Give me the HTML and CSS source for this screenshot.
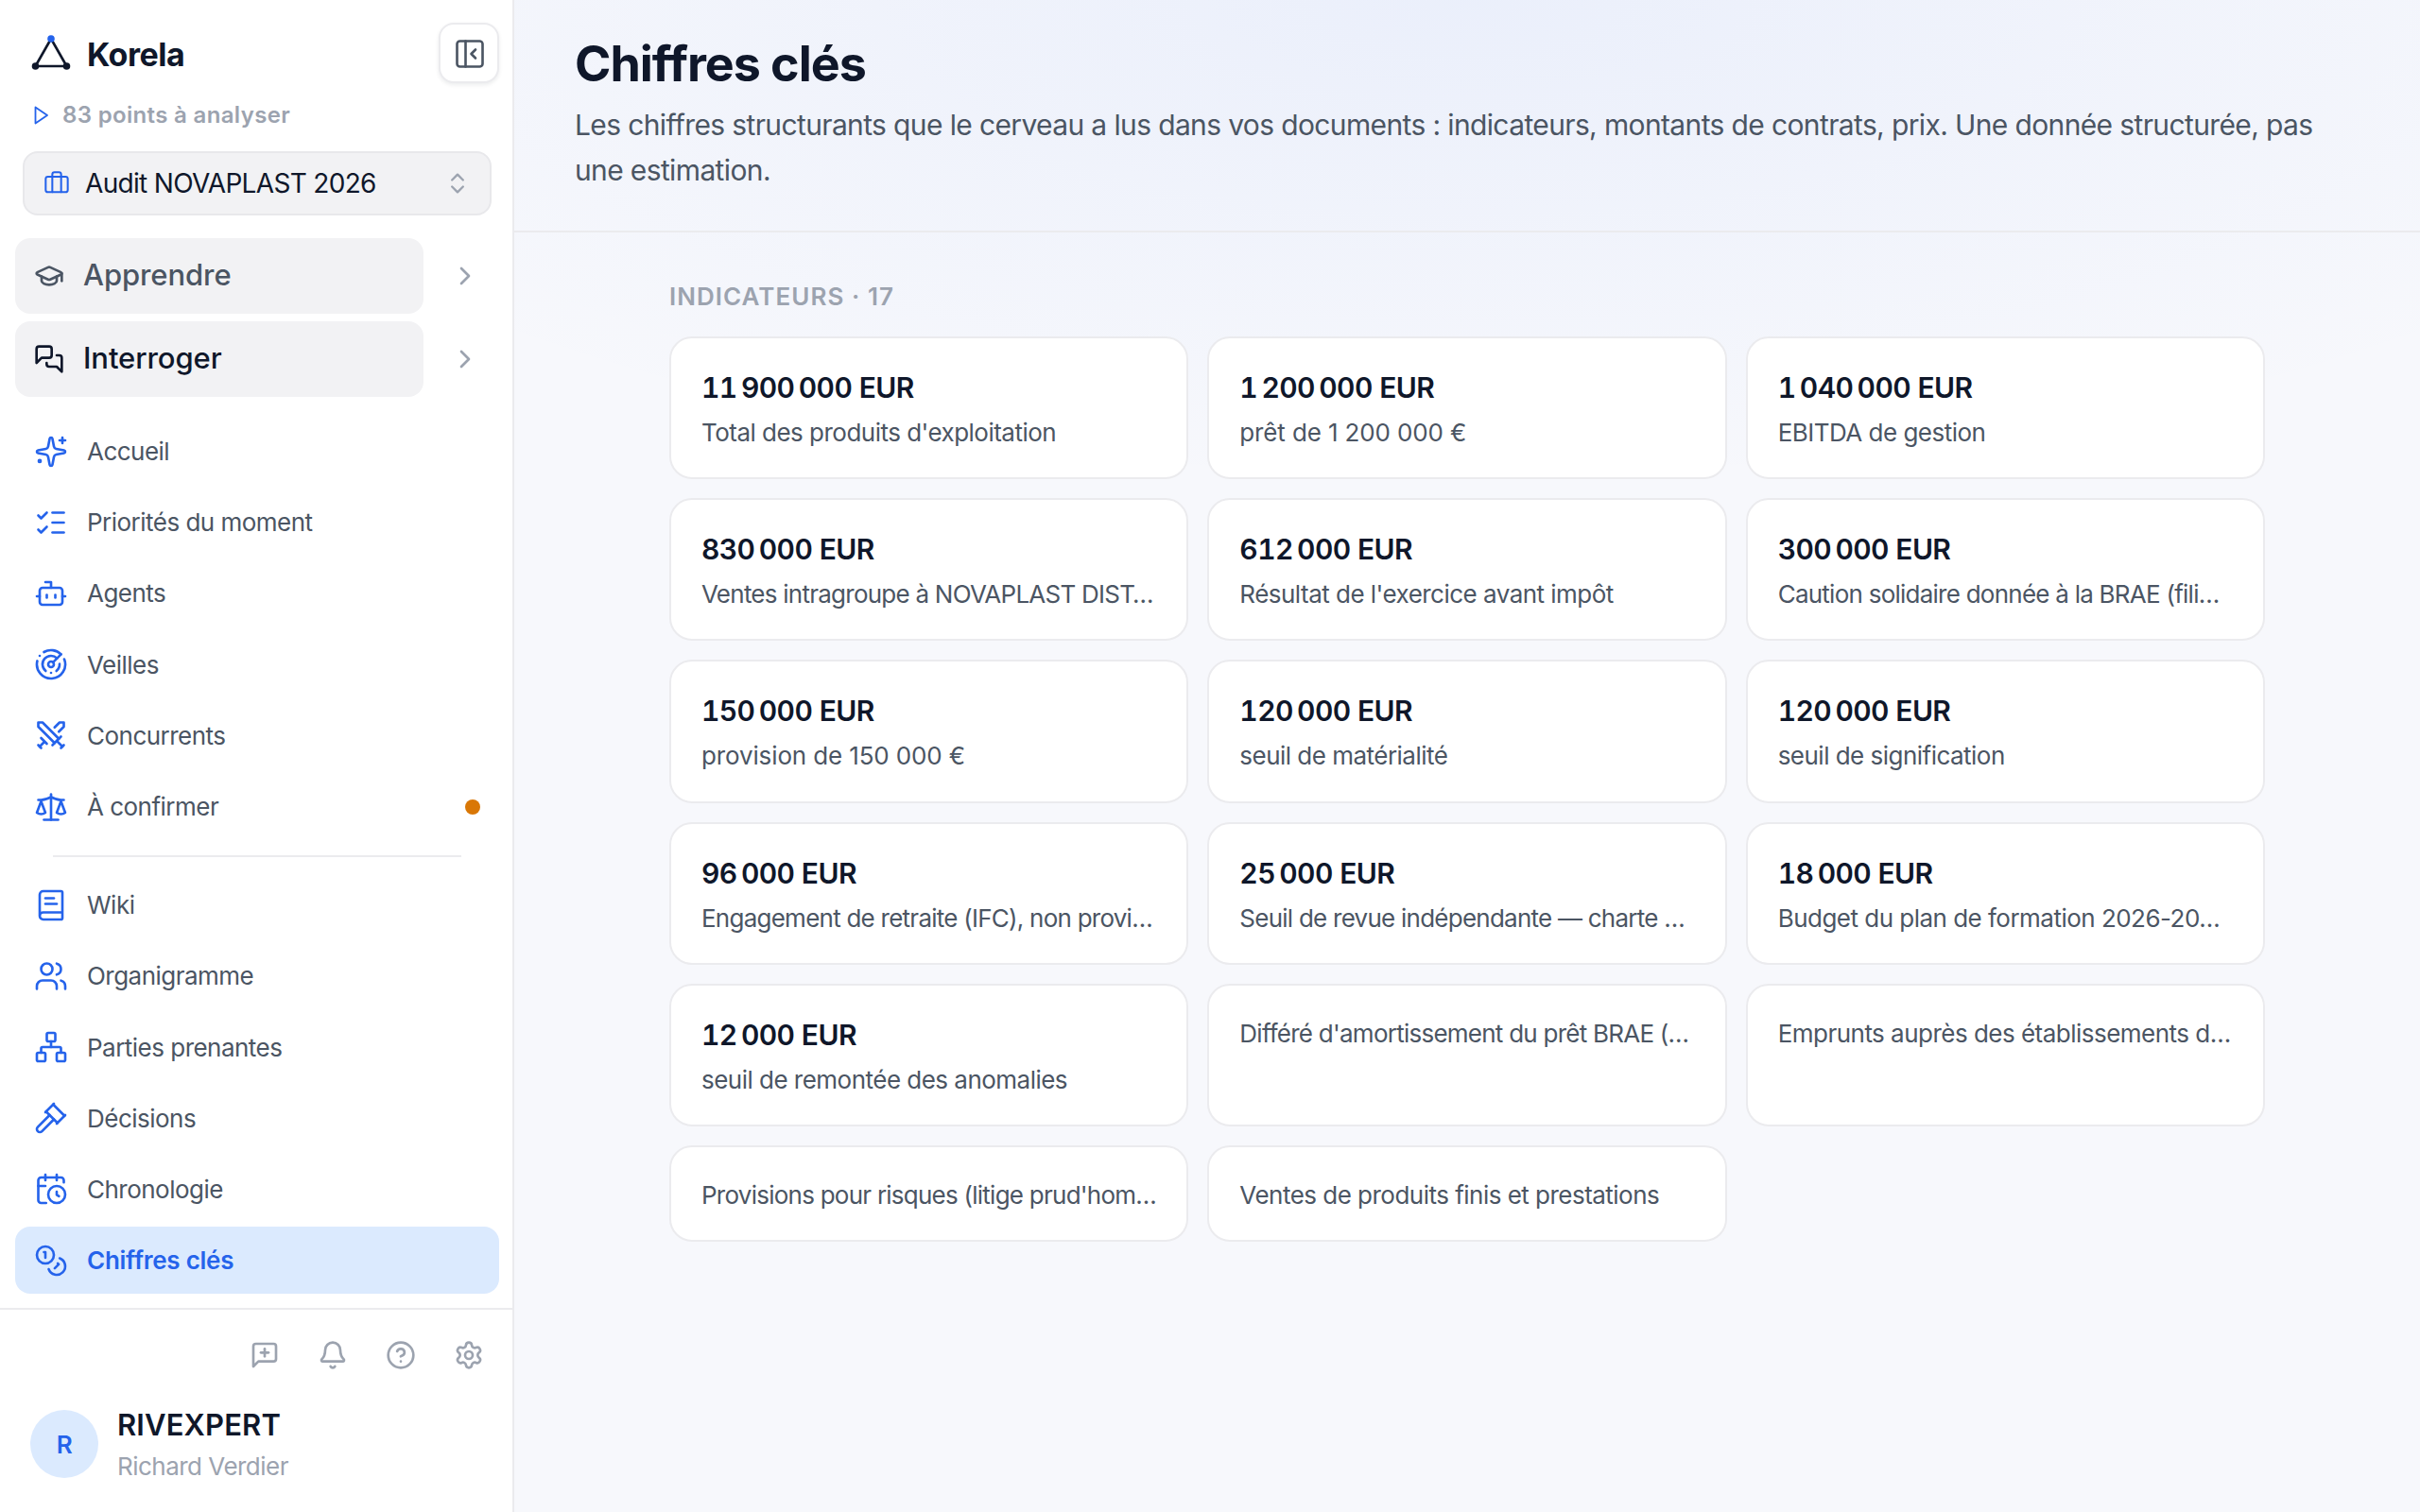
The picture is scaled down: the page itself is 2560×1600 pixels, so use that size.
FILE: index.html
```html
<!DOCTYPE html>
<html lang="fr">
<head>
<meta charset="UTF-8">
<meta name="viewport" content="width=device-width, initial-scale=1.0">
<title>Korela - Chiffres clés</title>
<link rel="stylesheet" href="styles.css">
</head>
<body>

<div class="app">
    <!-- Sidebar -->
    <aside class="sidebar">
        <div class="brand-row">
            <div class="brand">
                <svg class="logo" viewBox="0 0 44 40">
                    <path d="M22 5 L5.5 34 H38.5 Z" fill="none" stroke="#0f172a" stroke-width="2.6" stroke-linejoin="round"/>
                    <circle cx="5.5" cy="34" r="3.8" fill="#0f172a"/>
                    <circle cx="38.5" cy="34" r="3.8" fill="#0f172a"/>
                    <circle cx="22" cy="5" r="3.8" fill="#2563eb"/>
                </svg>
                <span class="brand-name">Korela</span>
            </div>
            <button class="toggle" aria-label="Replier">
                <svg class="icon icon-36" viewBox="0 0 24 24"><rect width="18" height="18" x="3" y="3" rx="2"/><path d="M9 3v18"/><path d="m16 15-3-3 3-3"/></svg>
            </button>
        </div>

        <div class="points">
            <svg class="points-icon" viewBox="0 0 16 20"><path d="M1.5 1.5 L14 10 L1.5 18.5 Z"/></svg>
            <span>83 points à analyser</span>
        </div>

        <div class="select">
            <svg class="icon icon-28 blue" viewBox="0 0 24 24"><path d="M16 20V4a2 2 0 0 0-2-2h-4a2 2 0 0 0-2 2v16"/><rect width="20" height="14" x="2" y="6" rx="2"/></svg>
            <span class="select-label">Audit NOVAPLAST 2026</span>
            <svg class="icon icon-28 bold muted" viewBox="0 0 24 24"><path d="m7 15 5 5 5-5"/><path d="m7 9 5-5 5 5"/></svg>
        </div>

        <div class="modes">
            <div class="mode-row">
                <a class="mode">
                    <svg class="icon icon-32 bold" viewBox="0 0 24 24"><path d="M21.42 10.922a1 1 0 0 0-.019-1.838L12.83 5.18a2 2 0 0 0-1.66 0L2.6 9.08a1 1 0 0 0 0 1.832l8.57 3.908a2 2 0 0 0 1.66 0z"/><path d="M22 10v6"/><path d="M6 12.5V16a6 3 0 0 0 12 0v-3.5"/></svg>
                    <span>Apprendre</span>
                </a>
                <svg class="icon icon-32 bold muted" viewBox="0 0 24 24"><path d="m9 18 6-6-6-6"/></svg>
            </div>
            <div class="mode-row">
                <a class="mode mode-dark">
                    <svg class="icon icon-32 bold" viewBox="0 0 24 24"><path d="M14 9a2 2 0 0 1-2 2H6l-4 4V4a2 2 0 0 1 2-2h8a2 2 0 0 1 2 2z"/><path d="M18 9h2a2 2 0 0 1 2 2v11l-4-4h-6a2 2 0 0 1-2-2v-1"/></svg>
                    <span>Interroger</span>
                </a>
                <svg class="icon icon-32 bold muted" viewBox="0 0 24 24"><path d="m9 18 6-6-6-6"/></svg>
            </div>
        </div>

        <nav class="nav">
            <a class="nav-item">
                <svg class="icon icon-36" viewBox="0 0 24 24"><path d="M11.017 2.814a1 1 0 0 1 1.966 0l1.051 5.558a2 2 0 0 0 1.594 1.594l5.558 1.051a1 1 0 0 1 0 1.966l-5.558 1.051a2 2 0 0 0-1.594 1.594l-1.051 5.558a1 1 0 0 1-1.966 0l-1.051-5.558a2 2 0 0 0-1.594-1.594l-5.558-1.051a1 1 0 0 1 0-1.966l5.558-1.051a2 2 0 0 0 1.594-1.594z"/><path d="M20 2v4"/><path d="M22 4h-4"/><circle cx="4" cy="18.6" r=".7"/></svg>
                <span>Accueil</span>
            </a>
            <a class="nav-item">
                <svg class="icon icon-36" viewBox="0 0 24 24"><path d="M13 5h8"/><path d="M13 12h8"/><path d="M13 19h8"/><path d="m3 17 2 2 4-4"/><path d="m3 7 2 2 4-4"/></svg>
                <span>Priorités du moment</span>
            </a>
            <a class="nav-item">
                <svg class="icon icon-36" viewBox="0 0 24 24"><path d="M12 8V4H8"/><rect width="16" height="12" x="4" y="8" rx="2"/><path d="M2 14h2"/><path d="M20 14h2"/><path d="M15 13v2"/><path d="M9 13v2"/></svg>
                <span>Agents</span>
            </a>
            <a class="nav-item">
                <svg class="icon icon-36" viewBox="0 0 24 24"><path d="M19.07 4.93A10 10 0 0 0 6.99 3.34"/><path d="M4 6h.01"/><path d="M2.29 9.62A10 10 0 1 0 21.31 8.35"/><path d="M16.24 7.76A6 6 0 1 0 8.23 16.67"/><path d="M12 18h.01"/><path d="M17.99 11.66A6 6 0 0 1 15.77 16.67"/><circle cx="12" cy="12" r="2"/><path d="m13.41 10.59 5.66-5.66"/></svg>
                <span>Veilles</span>
            </a>
            <a class="nav-item">
                <svg class="icon icon-36" viewBox="0 0 24 24"><polyline points="14.5 17.5 3 6 3 3 6 3 17.5 14.5"/><line x1="13" x2="19" y1="19" y2="13"/><line x1="16" x2="20" y1="16" y2="20"/><line x1="19" x2="21" y1="21" y2="19"/><polyline points="14.5 6.5 18 3 21 3 21 6 17.5 9.5"/><line x1="5" x2="9" y1="14" y2="18"/><line x1="7" x2="4" y1="17" y2="20"/><line x1="3" x2="5" y1="19" y2="21"/></svg>
                <span>Concurrents</span>
            </a>
            <a class="nav-item">
                <svg class="icon icon-36" viewBox="0 0 24 24"><path d="m16 16 3-8 3 8c-.87.65-1.92 1-3 1s-2.13-.35-3-1Z"/><path d="m2 16 3-8 3 8c-.87.65-1.92 1-3 1s-2.13-.35-3-1Z"/><path d="M7 21h10"/><path d="M12 3v18"/><path d="M3 7h2c2 0 5-1 7-2 2 1 5 2 7 2h2"/></svg>
                <span>À confirmer</span>
                <i class="dot"></i>
            </a>
            <hr class="nav-divider">
            <a class="nav-item">
                <svg class="icon icon-36" viewBox="0 0 24 24"><path d="M4 19.5v-15A2.5 2.5 0 0 1 6.5 2H19a1 1 0 0 1 1 1v18a1 1 0 0 1-1 1H6.5a1 1 0 0 1 0-5H20"/><path d="M8 11h8"/><path d="M8 7h6"/></svg>
                <span>Wiki</span>
            </a>
            <a class="nav-item">
                <svg class="icon icon-36" viewBox="0 0 24 24"><path d="M16 21v-2a4 4 0 0 0-4-4H6a4 4 0 0 0-4 4v2"/><path d="M16 3.128a4 4 0 0 1 0 7.744"/><path d="M22 21v-2a4 4 0 0 0-3-3.87"/><circle cx="9" cy="7" r="4"/></svg>
                <span>Organigramme</span>
            </a>
            <a class="nav-item">
                <svg class="icon icon-36" viewBox="0 0 24 24"><rect x="16" y="16" width="6" height="6" rx="1"/><rect x="2" y="16" width="6" height="6" rx="1"/><rect x="9" y="2" width="6" height="6" rx="1"/><path d="M5 16v-3a1 1 0 0 1 1-1h12a1 1 0 0 1 1 1v3"/><path d="M12 12V8"/></svg>
                <span>Parties prenantes</span>
            </a>
            <a class="nav-item">
                <svg class="icon icon-36" viewBox="0 0 24 24"><path d="m14 13-8.381 8.38a1 1 0 0 1-3.001-3l8.384-8.381"/><path d="m16 16 6-6"/><path d="m21.5 10.5-8-8"/><path d="m8 8 6-6"/><path d="m8.5 7.5 8 8"/></svg>
                <span>Décisions</span>
            </a>
            <a class="nav-item">
                <svg class="icon icon-36" viewBox="0 0 24 24"><path d="M16 14v2.2l1.6 1"/><path d="M16 2v4"/><path d="M21 7.5V6a2 2 0 0 0-2-2H5a2 2 0 0 0-2 2v14a2 2 0 0 0 2 2h3.5"/><path d="M3 10h5"/><path d="M8 2v4"/><circle cx="16" cy="16" r="6"/></svg>
                <span>Chronologie</span>
            </a>
            <a class="nav-item active">
                <svg class="icon icon-36" viewBox="0 0 24 24"><circle cx="8" cy="8" r="6"/><path d="M18.09 10.37A6 6 0 1 1 10.34 18"/><path d="M7 6h1v4"/><path d="m16.71 13.88.7.71-2.82 2.82"/></svg>
                <span>Chiffres clés</span>
            </a>
        </nav>

        <div class="footer">
            <div class="tools">
                <svg class="icon icon-32 bold" viewBox="0 0 24 24"><path d="M21 15a2 2 0 0 1-2 2H7l-4 4V5a2 2 0 0 1 2-2h14a2 2 0 0 1 2 2z"/><path d="M12 7v6"/><path d="M9 10h6"/></svg>
                <svg class="icon icon-32 bold" viewBox="0 0 24 24"><path d="M10.268 21a2 2 0 0 0 3.464 0"/><path d="M3.262 15.326A1 1 0 0 0 4 17h16a1 1 0 0 0 .74-1.673C19.41 13.956 18 12.499 18 8A6 6 0 0 0 6 8c0 4.499-1.411 5.956-2.738 7.326"/></svg>
                <svg class="icon icon-32 bold" viewBox="0 0 24 24"><circle cx="12" cy="12" r="10"/><path d="M9.09 9a3 3 0 0 1 5.83 1c0 2-3 3-3 3"/><path d="M12 17h.01"/></svg>
                <svg class="icon icon-32 bold" viewBox="0 0 24 24"><path d="M9.671 4.136a2.34 2.34 0 0 1 4.659 0 2.34 2.34 0 0 0 3.319 1.915 2.34 2.34 0 0 1 2.33 4.033 2.34 2.34 0 0 0 0 3.831 2.34 2.34 0 0 1-2.33 4.033 2.34 2.34 0 0 0-3.319 1.915 2.34 2.34 0 0 1-4.659 0 2.34 2.34 0 0 0-3.32-1.915 2.34 2.34 0 0 1-2.33-4.033 2.34 2.34 0 0 0 0-3.831A2.34 2.34 0 0 1 6.35 6.051a2.34 2.34 0 0 0 3.319-1.915"/><circle cx="12" cy="12" r="3"/></svg>
            </div>
            <div class="user">
                <div class="avatar">R</div>
                <div>
                    <div class="user-org">RIVEXPERT</div>
                    <div class="user-name">Richard Verdier</div>
                </div>
            </div>
        </div>
    </aside>

    <!-- Main content -->
    <main class="main">
        <header class="header">
            <h1>Chiffres clés</h1>
            <p>Les chiffres structurants que le cerveau a lus dans vos documents : indicateurs, montants de contrats, prix. Une donnée structurée, pas une estimation.</p>
        </header>

        <section class="content">
            <h2>Indicateurs · 17</h2>
            <div class="grid">
                <div class="card">
                    <div class="value">11&#8239;900&#8239;000 EUR</div>
                    <div class="label">Total des produits d'exploitation</div>
                </div>
                <div class="card">
                    <div class="value">1&#8239;200&#8239;000 EUR</div>
                    <div class="label amount">prêt de 1 200 000 €</div>
                </div>
                <div class="card">
                    <div class="value">1&#8239;040&#8239;000 EUR</div>
                    <div class="label">EBITDA de gestion</div>
                </div>
                <div class="card">
                    <div class="value">830&#8239;000 EUR</div>
                    <div class="label long">Ventes intragroupe à NOVAPLAST DIST…</div>
                </div>
                <div class="card">
                    <div class="value">612&#8239;000 EUR</div>
                    <div class="label">Résultat de l'exercice avant impôt</div>
                </div>
                <div class="card">
                    <div class="value">300&#8239;000 EUR</div>
                    <div class="label long">Caution solidaire donnée à la BRAE (fili…</div>
                </div>
                <div class="card">
                    <div class="value">150&#8239;000 EUR</div>
                    <div class="label amount">provision de 150 000 €</div>
                </div>
                <div class="card">
                    <div class="value">120&#8239;000 EUR</div>
                    <div class="label">seuil de matérialité</div>
                </div>
                <div class="card">
                    <div class="value">120&#8239;000 EUR</div>
                    <div class="label">seuil de signification</div>
                </div>
                <div class="card">
                    <div class="value">96&#8239;000 EUR</div>
                    <div class="label long">Engagement de retraite (IFC), non provi…</div>
                </div>
                <div class="card">
                    <div class="value">25&#8239;000 EUR</div>
                    <div class="label long">Seuil de revue indépendante — charte …</div>
                </div>
                <div class="card">
                    <div class="value">18&#8239;000 EUR</div>
                    <div class="label">Budget du plan de formation 2026-20…</div>
                </div>
                <div class="card">
                    <div class="value">12&#8239;000 EUR</div>
                    <div class="label">seuil de remontée des anomalies</div>
                </div>
                <div class="card">
                    <div class="label long">Différé d'amortissement du prêt BRAE (…</div>
                </div>
                <div class="card">
                    <div class="label">Emprunts auprès des établissements d…</div>
                </div>
                <div class="card">
                    <div class="label long">Provisions pour risques (litige prud'hom…</div>
                </div>
                <div class="card">
                    <div class="label">Ventes de produits finis et prestations</div>
                </div>
            </div>
        </section>
    </main>
</div>

</body>
</html>
```
FILE: styles.css
```css
* {
    box-sizing: border-box;
}
body {
    margin: 0;
    font-family: Inter, "Liberation Sans", sans-serif;
    font-size: 26px;
    letter-spacing: -0.02em;
    color: #0f172a;
    background-color: #f7f8fc;
}
h1, h2, p {
    margin: 0;
}
.app {
    display: flex;
    height: 100vh;
    overflow: hidden;
}

/* Icons */
.icon {
    flex-shrink: 0;
    fill: none;
    stroke: currentColor;
    stroke-width: 1.75;
    stroke-linecap: round;
    stroke-linejoin: round;
}
.icon.bold { stroke-width: 2; }
.icon-28 { width: 28px; height: 28px; }
.icon-32 { width: 32px; height: 32px; }
.icon-36 { width: 36px; height: 36px; }
.blue { color: #2563eb; }
.muted { color: #9ca3af; }

/* Sidebar */
.sidebar {
    display: flex;
    flex-direction: column;
    flex-shrink: 0;
    width: 544px;
    background-color: #fff;
    border-right: 2px solid #ebebee;
}
.brand-row {
    display: flex;
    justify-content: space-between;
    align-items: center;
    padding: 24px 14px 0 32px;
}
.brand {
    display: flex;
    align-items: center;
    gap: 16px;
}
.logo {
    width: 44px;
    height: 40px;
}
.brand-name {
    font-size: 34px;
    font-weight: 700;
    letter-spacing: -0.015em;
    line-height: 48px;
    padding-top: 4px;
}
.toggle {
    display: flex;
    justify-content: center;
    align-items: center;
    width: 64px;
    height: 64px;
    padding: 2px 0 0 2px;
    color: #4b5563;
    background-color: #fff;
    border: 2px solid #ebebee;
    border-radius: 16px;
    box-shadow: 0 2px 4px rgba(15, 23, 42, 0.08);
}
.points {
    display: flex;
    align-items: center;
    gap: 14px;
    padding-left: 36px;
    margin-top: 16px;
    line-height: 36px;
    font-size: 24px;
    font-weight: 600;
    letter-spacing: 0.014em;
    color: #9ca3af;
}
.points-icon {
    width: 16px;
    height: 20px;
    fill: none;
    stroke: #2563eb;
    stroke-width: 1.8;
    stroke-linejoin: round;
}
.select {
    display: flex;
    align-items: center;
    gap: 16px;
    height: 68px;
    margin: 20px 22px 0 24px;
    padding: 0 20px;
    background-color: #f2f2f4;
    border: 2px solid #e8e8eb;
    border-radius: 16px;
}
.select-label {
    flex: 1;
    font-size: 28px;
    letter-spacing: -0.024em;
}
.modes {
    display: flex;
    flex-direction: column;
    gap: 8px;
    margin-top: 24px;
    padding-left: 16px;
}
.mode-row {
    display: flex;
    align-items: center;
    gap: 28px;
}
.mode {
    display: flex;
    align-items: center;
    gap: 20px;
    width: 432px;
    height: 80px;
    padding-left: 20px;
    font-size: 31px;
    font-weight: 500;
    line-height: 40px;
    letter-spacing: -0.003em;
    color: #4b5563;
    background-color: #f2f2f4;
    border-radius: 16px;
}
.mode span {
    padding-bottom: 3px;
}
.mode-dark {
    color: #0f172a;
}
.nav {
    display: flex;
    flex-direction: column;
    gap: 4px;
    margin-top: 22px;
    padding: 0 14px 0 16px;
}
.nav-item {
    display: flex;
    align-items: center;
    gap: 20px;
    height: 71.2px;
    padding: 0 20px;
    color: #4b5563;
    border-radius: 16px;
}
.nav-item .icon {
    color: #2563eb;
}
.nav-item.active {
    font-weight: 600;
    letter-spacing: -0.01em;
    color: #2563eb;
    background-color: #dbeafe;
}
.dot {
    width: 16px;
    height: 16px;
    margin-left: auto;
    border-radius: 50%;
    background-color: #d97706;
}
.nav-divider {
    width: 432px;
    height: 2px;
    margin: 12px 0 11px 40px;
    border: none;
    background-color: #ebebee;
}

/* Sidebar footer */
.footer {
    margin-top: auto;
    height: 216px;
    padding: 32px 30px 0 32px;
    border-top: 2px solid #ebebee;
}
.tools {
    display: flex;
    justify-content: flex-end;
    gap: 40px;
    color: #9ca3af;
}
.user {
    display: flex;
    align-items: center;
    gap: 20px;
    margin-top: 34px;
}
.avatar {
    display: flex;
    justify-content: center;
    align-items: center;
    width: 72px;
    height: 72px;
    font-weight: 600;
    color: #2563eb;
    background-color: #dbeafe;
    border-radius: 50%;
}
.user-org {
    font-size: 31px;
    font-weight: 600;
    letter-spacing: 0.004em;
    line-height: 48px;
}
.user-name {
    line-height: 40px;
    letter-spacing: -0.02em;
    color: #9ca3af;
}

/* Main */
.main {
    flex: 1;
    min-width: 0;
    background-image: radial-gradient(ellipse 1450px 520px at 50% 0, rgba(37, 99, 235, 0.06), rgba(37, 99, 235, 0));
}
.header {
    height: 246px;
    padding: 36px 64px 0;
    border-bottom: 2px solid #ebebee;
}
.header h1 {
    font-size: 52px;
    font-weight: 700;
    letter-spacing: -0.02em;
    line-height: 64px;
}
.header p {
    margin-top: 8px;
    font-size: 30px;
    line-height: 48px;
    letter-spacing: -0.021em;
    color: #4b5563;
}
.content {
    width: 1688px;
    margin: 0 auto;
    padding-top: 48px;
}
.content h2 {
    margin-bottom: 22px;
    font-size: 26px;
    font-weight: 600;
    line-height: 40px;
    letter-spacing: 0.04em;
    text-transform: uppercase;
    color: #9ca3af;
}
.grid {
    display: grid;
    grid-template-columns: repeat(3, minmax(0, 1fr));
    gap: 20px;
}
.card {
    padding: 30px 32px 26px;
    background-color: #fff;
    border: 2px solid #ebebee;
    border-radius: 24px;
}
.value {
    margin-bottom: 4px;
    font-size: 30px;
    font-weight: 600;
    line-height: 45px;
    letter-spacing: -0.02em;
    font-variant-numeric: tabular-nums;
}
.label {
    line-height: 42.2px;
    color: #4b5563;
    white-space: nowrap;
}
.label.long {
    letter-spacing: -0.029em;
}
.label.amount {
    letter-spacing: -0.005em;
}
```
